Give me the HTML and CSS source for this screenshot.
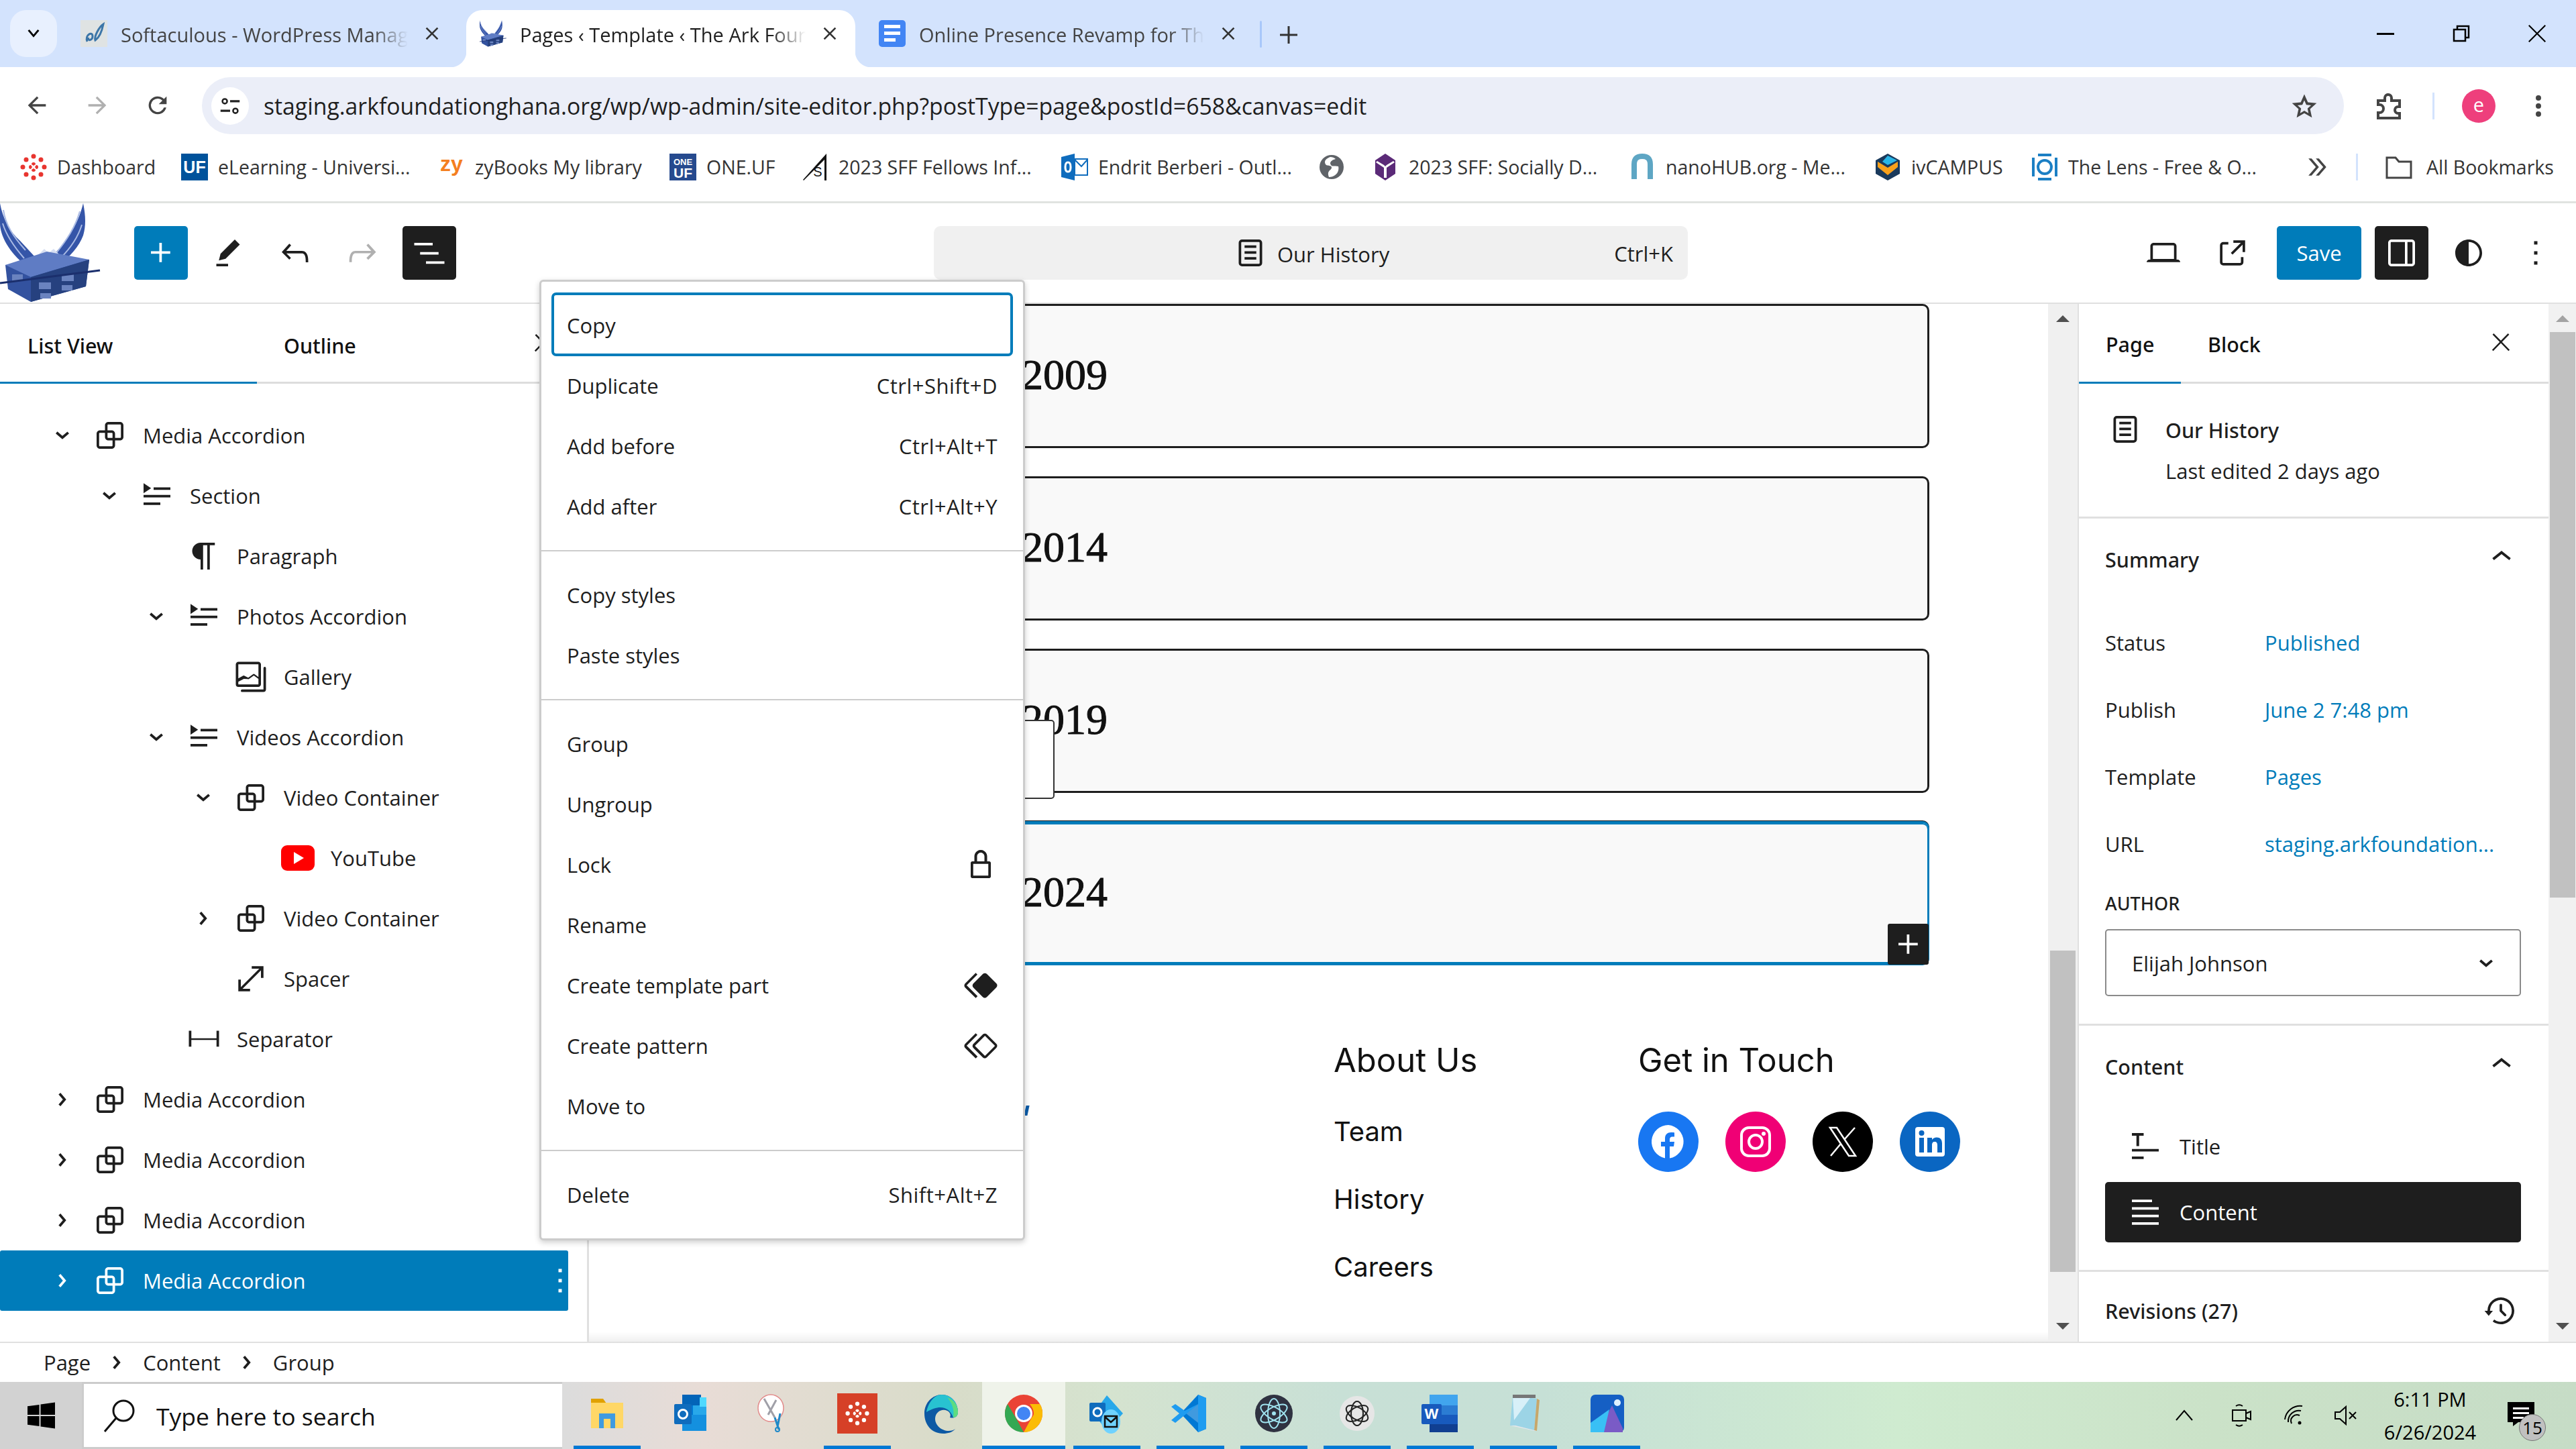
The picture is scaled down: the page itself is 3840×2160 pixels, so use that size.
FILE: index.html
```html
<!DOCTYPE html>
<html lang="en">
<head>
<meta charset="utf-8">
<title>Pages ‹ Template ‹ The Ark Foundation</title>
<link rel="stylesheet" href="styles.css">
</head>
<body>
<svg class="sprite" xmlns="http://www.w3.org/2000/svg">
  <symbol id="plus" viewBox="0 0 24 24"><path d="M11 12.5V17.5H12.5V12.5H17.5V11H12.5V6H11V11H6V12.5H11Z"/></symbol>
  <symbol id="pen" viewBox="0 0 24 24"><path d="m19 7-3-3-8.5 8.5-1 4 4-1L19 7Zm-7 11.5H5V20h7v-1.5Z"/></symbol>
  <symbol id="undo" viewBox="0 0 24 24"><path d="M18.3 11.7c-.6-.6-1.4-.9-2.3-.9H6.7l2.9-3.3-1.1-1-4.5 5L8.5 16l1-1-2.7-2.7H16c.5 0 .9.2 1.3.5 1 1 1 3.4 1 4.5v.3h1.5v-.2c0-1.5 0-4.3-1.5-5.7z"/></symbol>
  <symbol id="redo" viewBox="0 0 24 24"><path d="M15.6 6.5l-1.1 1 2.9 3.3H8c-.9 0-1.7.3-2.3.9-1.4 1.5-1.4 4.2-1.4 5.6v.2h1.5v-.3c0-1.1 0-3.5 1-4.5.3-.3.7-.5 1.3-.5h9.2L14.5 15l1.1 1.1 4.6-4.6-4.6-5z"/></symbol>
  <symbol id="outline" viewBox="0 0 24 24"><path d="M3 6h11v1.5H3V6Zm3.5 5.5h11V13h-11v-1.5ZM21 17H10v1.5h11V17Z"/></symbol>
  <symbol id="doc" viewBox="0 0 24 24"><path d="M15.5 7.5h-7V9h7V7.5Zm-7 3.5h7v1.5h-7V11Zm7 3.5h-7V16h7v-1.5Z"/><path d="M17 4H7a2 2 0 0 0-2 2v12a2 2 0 0 0 2 2h10a2 2 0 0 0 2-2V6a2 2 0 0 0-2-2Zm-10 1.5h10a.5.5 0 0 1 .5.5v12a.5.5 0 0 1-.5.5H7a.5.5 0 0 1-.5-.5V6a.5.5 0 0 1 .5-.5Z"/></symbol>
  <symbol id="group" viewBox="0 0 24 24"><path d="M18 4h-7c-1.1 0-2 .9-2 2v3H6c-1.1 0-2 .9-2 2v7c0 1.1.9 2 2 2h7c1.1 0 2-.9 2-2v-3h3c1.1 0 2-.9 2-2V6c0-1.1-.9-2-2-2zm-4.5 14c0 .3-.2.5-.5.5H6c-.3 0-.5-.2-.5-.5v-7c0-.3.2-.5.5-.5h3V13c0 1.1.9 2 2 2h2.5v3zm0-4.5H11c-.3 0-.5-.2-.5-.5v-2.5H13c.3 0 .5.2.5.5v2.5zm5-.5c0 .3-.2.5-.5.5h-3V11c0-1.1-.9-2-2-2h-2.5V6c0-.3.2-.5.5-.5h7c.3 0 .5.2.5.5v7z"/></symbol>
  <symbol id="down" viewBox="0 0 24 24"><path d="m15.99 10.889-3.988 3.418-3.988-3.418.976-1.14 3.012 2.582 3.012-2.581.976 1.139Z"/></symbol>
  <symbol id="right" viewBox="0 0 24 24"><path d="M10.8622 8.04053L14.2805 12.0286L10.8622 16.0167L9.72327 15.0405L12.3049 12.0286L9.72327 9.01672L10.8622 8.04053Z"/></symbol>
  <symbol id="para" viewBox="0 0 24 24"><path d="m9.99609 14v-.2251l.00391.0001v6.225h1.5v-14.5h2.5v14.5h1.5v-14.5h3v-1.5h-8.50391c-2.76142 0-5 2.23858-5 5 0 2.7614 2.23858 5 5 5z"/></symbol>
  <symbol id="gallery" viewBox="0 0 24 24"><path d="M16.375 4.5H4.625a.125.125 0 0 0-.125.125v8.254l2.859-1.54a.75.75 0 0 1 .68-.016l2.384 1.142 2.89-2.074a.75.75 0 0 1 .874 0l2.313 1.66V4.625a.125.125 0 0 0-.125-.125ZM3 4.625C3 3.728 3.728 3 4.625 3h11.75C17.272 3 18 3.728 18 4.625v11.75c0 .897-.728 1.625-1.625 1.625H4.625A1.625 1.625 0 0 1 3 16.375V4.625Zm1.5 10.303v1.447c0 .07.056.125.125.125h11.75a.125.125 0 0 0 .125-.125v-3.19l-2.75-1.975-2.813 2.018a.75.75 0 0 1-.76.067L7.78 13.15 4.5 14.928Z" fill-rule="evenodd"/><path d="M20.25 6a.75.75 0 0 1 .75.75v12.625A1.625 1.625 0 0 1 19.375 21H6.75a.75.75 0 0 1 0-1.5h12.625a.125.125 0 0 0 .125-.125V6.75a.75.75 0 0 1 .75-.75Z"/></symbol>
  <symbol id="details" viewBox="0 0 24 24"><path d="M4 16h10v1.5H4V16Zm0-4.5h16V13H4v-1.5ZM10 7h10v1.5H10V7Z"/><path d="M4 4.5v6L8.5 7.5 4 4.5Z"/></symbol>
  <symbol id="spacer" viewBox="0 0 24 24"><path d="M7 18h4.5v1.5h-7v-7H6V17L17 6h-4.5V4.5h7v7H18V7L7 18Z"/></symbol>
  <symbol id="sep" viewBox="0 0 24 24"><path d="M4.5 12.5v4H3V7h1.5v4.5h15V7H21v9.5h-1.5v-4h-15Z"/></symbol>
  <symbol id="dots" viewBox="0 0 24 24"><path d="M13 19h-2v-2h2v2zm0-6h-2v-2h2v2zm0-6h-2V5h2v2z"/></symbol>
  <symbol id="close" viewBox="0 0 24 24"><path d="M13 11.8l6.1-6.3-1-1-6.1 6.2-6.1-6.2-1 1 6.1 6.3-6.5 6.7 1 1 6.5-6.6 6.5 6.6 1-1z"/></symbol>
  <symbol id="up" viewBox="0 0 24 24"><path d="M6.5 12.4L12 8l5.5 4.4-.9 1.2L12 10l-4.5 3.6-1-1.2z"/></symbol>
  <symbol id="laptop" viewBox="0 0 24 24"><path d="M20.5 16h-.7V8c0-1.1-.9-2-2-2H6.2c-1.1 0-2 .9-2 2v8h-.7c-.8 0-1.5.7-1.5 1.5h20c0-.8-.7-1.5-1.5-1.5zM5.7 8c0-.3.2-.5.5-.5h11.6c.3 0 .5.2.5.5v7.6H5.7V8z"/></symbol>
  <symbol id="external" viewBox="0 0 24 24"><path d="M19.5 4.5h-7V6h4.44l-5.97 5.97 1.06 1.06L18 7.06v4.44h1.5v-7Zm-13 1a2 2 0 0 0-2 2v10a2 2 0 0 0 2 2h10a2 2 0 0 0 2-2v-3H17v3a.5.5 0 0 1-.5.5h-10a.5.5 0 0 1-.5-.5v-10a.5.5 0 0 1 .5-.5h3V5.5h-3Z"/></symbol>
  <symbol id="drawer" viewBox="0 0 24 24"><path d="M18 4H6c-1.1 0-2 .9-2 2v12c0 1.1.9 2 2 2h12c1.1 0 2-.9 2-2V6c0-1.1-.9-2-2-2zm-4 14.5H6c-.3 0-.5-.2-.5-.5V6c0-.3.2-.5.5-.5h8v13zm4.5-.5c0 .3-.2.5-.5.5h-2.5v-13H18c.3 0 .5.2.5.5v12z"/></symbol>
  <symbol id="styles" viewBox="0 0 24 24"><path fill-rule="evenodd" d="M12 4c-4.4 0-8 3.6-8 8s3.6 8 8 8 8-3.6 8-8-3.6-8-8-8zm0 14.5c3.6 0 6.5-2.9 6.5-6.5S15.6 5.5 12 5.5v13z"/></symbol>
  <symbol id="lock" viewBox="0 0 24 24"><path d="M17 10h-1.2V7c0-2.1-1.7-3.8-3.8-3.8-2.1 0-3.8 1.7-3.8 3.8v3H7c-.6 0-1 .4-1 1v8c0 .6.4 1 1 1h10c.6 0 1-.4 1-1v-8c0-.6-.4-1-1-1zm-2.8 0H9.8V7c0-1.2 1-2.2 2.2-2.2s2.2 1 2.2 2.2v3zm2.3 8.5h-9v-7h9v7z"/></symbol>
  <symbol id="symfill" viewBox="0 0 24 24"><path d="M21.3 10.8l-5.6-5.6c-.7-.7-1.8-.7-2.5 0l-5.6 5.6c-.7.7-.7 1.8 0 2.5l5.6 5.6c.3.3.8.5 1.2.5s.9-.2 1.2-.5l5.6-5.6c.8-.7.8-1.9.1-2.5zm-17.6 1L10 5.5l-1-1-6.3 6.3c-.7.7-.7 1.8 0 2.5L9 19.5l1.1-1.1-6.3-6.3c-.2 0-.2-.2-.1-.3z"/></symbol>
  <symbol id="symline" viewBox="0 0 24 24"><path d="M21.3 10.8l-5.6-5.6c-.7-.7-1.8-.7-2.5 0l-5.6 5.6c-.7.7-.7 1.8 0 2.5l5.6 5.6c.3.3.8.5 1.2.5s.9-.2 1.2-.5l5.6-5.6c.8-.7.8-1.9.1-2.5zm-1 1.4l-5.6 5.6c-.1.1-.3.1-.4 0l-5.6-5.6c-.1-.1-.1-.3 0-.4l5.6-5.6s.1-.1.2-.1.1 0 .2.1l5.6 5.6c.1.1.1.3 0 .4zm-16.6-.4L10 5.5l-1-1-6.3 6.3c-.7.7-.7 1.8 0 2.5L9 19.5l1.1-1.1-6.3-6.3c-.2 0-.2-.2-.1-.3z"/></symbol>
  <symbol id="lines" viewBox="0 0 24 24"><path d="M4 6h12V4.5H4V6Zm16 4.5H4V9h16v1.5ZM4 15h16v-1.5H4V15Zm0 4.5h16V18H4v1.5Z"/></symbol>
  <symbol id="titleic" viewBox="0 0 24 24"><path d="M4 4h7v1.6H8.3v6.2H6.7V5.6H4V4Zm0 9.5h16V15H4v-1.5ZM4 18h7v1.5H4V18Z"/></symbol>
  <symbol id="backup" viewBox="0 0 24 24"><path d="M5.5 12h1.75l-2.5 3-2.5-3H4a8 8 0 113.134 6.35l.907-1.194A6.5 6.5 0 105.5 12zm9.53 1.97l-2.28-2.28V8.5a.75.75 0 00-1.5 0V12a.747.747 0 00.218.529l2.5 2.5a.75.75 0 101.06-1.061z"/></symbol>
  <symbol id="ark" viewBox="0 0 150 148">
    <path fill="#3555a8" d="M0 0C4 22 14 42 30 56L54 82 38 92C14 74 0 48 0 30Z"/>
    <path fill="#3555a8" d="M124 0C128 20 128 34 124 48 118 64 104 80 90 90L76 80C96 62 116 34 124 0Z"/>
    <path fill="none" stroke="#a9bae4" stroke-width="2" d="M5 10C8 32 20 50 38 70M4 30C10 50 22 66 36 82M119 12C112 36 100 54 84 74M122 32C116 52 104 68 90 82"/>
    <path fill="#d7dff2" d="M56 78 66 68 74 76 66 84ZM70 76 80 68 92 80 80 86Z"/>
    <path fill="#33529f" d="M8 92 70 86 133 84 128 124 46 147 12 128Z"/>
    <path fill="#5f7cc4" d="M8 92 46 110 133 84 70 72Z"/>
    <path fill="#26417f" d="M46 110 46 147 128 124 133 84Z"/>
    <path fill="#6a83bf" d="M58 118h18v10H58ZM92 106h18v10H92ZM60 134h16v8H60ZM92 122h16v8H92ZM18 106h16v10H18Z"/>
    <path stroke="#1b2f6d" stroke-width="3" fill="none" d="M0 119 149 100"/>
  </symbol>
  <symbol id="gdoc" viewBox="0 0 40 40"><rect width="40" height="40" rx="5" fill="#4285f4"/><path fill="#fff" d="M8 7h24v5H8ZM8 17h24v5H8ZM8 27h17v5H8Z"/></symbol>
  <symbol id="outlookic" viewBox="0 0 40 40"><path fill="#0f6cbd" d="M0 5 20 0v40L0 35Z"/><path fill="none" stroke="#fff" stroke-width="3" d="M10 13c-3 0-4 3-4 7s1 7 4 7 4-3 4-7-1-7-4-7Z"/><path fill="#fff" stroke="#0f6cbd" stroke-width="2" d="M20 8h19v24H20Z"/><path fill="none" stroke="#0f6cbd" stroke-width="2" d="M20 9l10 10L39 9"/></symbol>
  <symbol id="canvasdots" viewBox="0 0 40 40"><g fill="currentColor"><circle cx="20" cy="4" r="3.5"/><circle cx="20" cy="36" r="3.5"/><circle cx="4" cy="20" r="3.5"/><circle cx="36" cy="20" r="3.5"/><circle cx="9" cy="9" r="3.5"/><circle cx="31" cy="9" r="3.5"/><circle cx="9" cy="31" r="3.5"/><circle cx="31" cy="31" r="3.5"/><path d="M20 13c2 0 3 1 3 3l-3 2-3-2c0-2 1-3 3-3ZM20 27c-2 0-3-1-3-3l3-2 3 2c0 2-1 3-3 3ZM13 20c0-2 1-3 3-3l2 3-2 3c-2 0-3-1-3-3ZM27 20c0 2-1 3-3 3l-2-3 2-3c2 0 3 1 3 3Z"/></g></symbol>
</svg>

<header class="tabstrip">
  <div class="tab-menu"><svg class="ic-tabmenu" viewBox="0 0 24 24"><path d="M6 9l6 7 6-7-1.6-1.3L12 13 7.6 7.7Z"/></svg></div>
  <div class="tab">
    <svg class="fav" viewBox="0 0 40 40"><rect width="40" height="40" fill="#dfe3e3"/><path fill="none" stroke="#3c76a8" stroke-width="3" d="M10 32C6 22 18 16 18 24c0 6-8 8-6 2M34 6C28 10 20 24 22 30c6-4 10-14 12-24Z"/></svg>
    <span class="tab-title">Softaculous - WordPress Manag</span>
    <svg class="ic-x" viewBox="0 0 24 24"><path d="M6.4 5 12 10.6 17.6 5 19 6.4 13.4 12l5.6 5.6-1.4 1.4L12 13.4 6.4 19 5 17.6 10.6 12 5 6.4Z"/></svg>
  </div>
  <div class="tab active">
    <svg class="fav"><use href="#ark"/></svg>
    <span class="tab-title">Pages ‹ Template ‹ The Ark Four</span>
    <svg class="ic-x" viewBox="0 0 24 24"><path d="M6.4 5 12 10.6 17.6 5 19 6.4 13.4 12l5.6 5.6-1.4 1.4L12 13.4 6.4 19 5 17.6 10.6 12 5 6.4Z"/></svg>
  </div>
  <div class="tab">
    <svg class="fav"><use href="#gdoc"/></svg>
    <span class="tab-title">Online Presence Revamp for Th</span>
    <svg class="ic-x" viewBox="0 0 24 24"><path d="M6.4 5 12 10.6 17.6 5 19 6.4 13.4 12l5.6 5.6-1.4 1.4L12 13.4 6.4 19 5 17.6 10.6 12 5 6.4Z"/></svg>
  </div>
  <span class="tab-sep"></span>
  <svg class="ic-newtab" viewBox="0 0 26 26"><path d="M11.5 0h3v11.500h11.500v3H14.500V26h-3V14.500H0v-3h11.500Z"/></svg>
  <div class="winctl">
    <svg class="win" viewBox="0 0 26 26"><path d="M0 12h26v3H0Z"/></svg>
    <svg class="win" viewBox="0 0 26 26"><path fill="none" stroke="#000" stroke-width="2.500" d="M2 7h17v17H2ZM7 7V2h17v17h-5"/></svg>
    <svg class="win" viewBox="0 0 26 26"><path d="M1.500 0 13 11.500 24.500 0 26 1.500 14.500 13 26 24.500 24.500 26 13 14.500 1.500 26 0 24.500 11.500 13 0 1.500Z"/></svg>
  </div>
</header>

<nav class="toolbar">
  <svg class="navic" viewBox="0 0 24 24"><path d="M20 11H7.800l5.600-5.600L12 4l-8 8 8 8 1.400-1.400L7.800 13H20Z"/></svg>
  <svg class="navic dim" viewBox="0 0 24 24"><path d="M4 11h12.200l-5.600-5.600L12 4l8 8-8 8-1.400-1.400 5.600-5.600H4Z"/></svg>
  <svg class="navic" viewBox="0 0 24 24"><path d="M17.650 6.350A8 8 0 1 0 19.730 14h-2.080A6 6 0 1 1 12 6c1.660 0 3.140.69 4.220 1.780L13 11h7V4Z"/></svg>
  <div class="omnibox">
    <div class="tune"><svg class="ic-tune" viewBox="0 0 24 24"><path d="M4 7.500a3 3 0 1 1 6 0 3 3 0 0 1-6 0Zm1.600 0a1.400 1.400 0 1 0 2.800 0 1.400 1.400 0 0 0-2.800 0ZM12 6.500h9v2h-9ZM14 16.500a3 3 0 1 1 6 0 3 3 0 0 1-6 0Zm1.600 0a1.400 1.400 0 1 0 2.800 0 1.400 1.400 0 0 0-2.800 0ZM3 15.500h9v2H3Z"/></svg></div>
    <span class="url">staging.arkfoundationghana.org/wp/wp-admin/site-editor.php?postType=page&amp;postId=658&amp;canvas=edit</span>
    <svg class="ic-star" viewBox="0 0 24 24"><path d="M12 2.500l2.900 6.500 7.100.7-5.300 4.700 1.500 7-6.200-3.600-6.200 3.600 1.500-7L2 9.700l7.100-.7Zm0 4.900L10.400 11l-3.900.4 2.900 2.600-.8 3.800 3.400-2 3.400 2-.8-3.800 2.900-2.600-3.900-.4Z"/></svg>
  </div>
  <div class="tool-right">
    <svg class="ic-ext" viewBox="0 0 24 24"><path fill="none" stroke="#444" stroke-width="2" d="M4 8h5V6a2.500 2.500 0 0 1 5 0v2h6v4.500h-1a2.500 2.500 0 0 0 0 5h1V21H4v-4h1a3 3 0 0 0 0-6H4Z"/></svg>
    <span class="tool-sep"></span>
    <div class="avatar">e</div>
    <svg class="ic-ext" viewBox="0 0 24 24"><path fill="#444" d="M12 4a2 2 0 1 1 0 4 2 2 0 0 1 0-4Zm0 6a2 2 0 1 1 0 4 2 2 0 0 1 0-4Zm0 6a2 2 0 1 1 0 4 2 2 0 0 1 0-4Z"/></svg>
  </div>
</nav>

<nav class="bookmarks">
  <a class="bm"><svg class="bmi cv"><use href="#canvasdots"/></svg><span>Dashboard</span></a>
  <a class="bm"><svg class="bmi" viewBox="0 0 40 40"><rect width="40" height="40" fill="#00529b"/><text x="20" y="29" text-anchor="middle" class="svgt uf">UF</text></svg><span>eLearning - Universi...</span></a>
  <a class="bm"><svg class="bmi" viewBox="0 0 40 40"><text x="20" y="26" text-anchor="middle" class="svgt zy">zy</text></svg><span>zyBooks My library</span></a>
  <a class="bm"><svg class="bmi" viewBox="0 0 40 40"><rect width="40" height="40" fill="#264a8e"/><text x="20" y="17" text-anchor="middle" class="svgt one">ONE</text><text x="20" y="36" text-anchor="middle" class="svgt uf2">UF</text></svg><span>ONE.UF</span></a>
  <a class="bm"><svg class="bmi" viewBox="0 0 40 40"><path fill="#111" d="M37 0v40h-3V9L3 40l-1-1Z"/><text x="24" y="34" text-anchor="middle" class="svgt s">S</text></svg><span>2023 SFF Fellows Inf...</span></a>
  <a class="bm"><svg class="bmi"><use href="#outlookic"/></svg><span>Endrit Berberi - Outl...</span></a>
  <a class="bm"><svg class="bmi" viewBox="0 0 40 40"><circle cx="20" cy="20" r="18" fill="#5f6368"/><path fill="#fff" d="M18 5c-8 3-10 8-6 12 4 2 8 0 8 4s-8 4-4 14c10 0 16-8 14-16-6-2-10 2-12-4 0-4 4-6 8-7-2-2-5-3-8-3Z"/></svg></a>
  <a class="bm"><svg class="bmi" viewBox="0 0 40 40"><path fill="#5b2a78" d="M20 0 35 10v20L20 40 5 30V10Z"/><path fill="#fff" d="M6 13l12 8v15l4 0V21l12-8-2-2-10 6-2 2-2-2L8 11Z"/></svg><span>2023 SFF: Socially D...</span></a>
  <a class="bm"><svg class="bmi" viewBox="0 0 40 40"><path fill="none" stroke="#5ea6c4" stroke-width="8" d="M8 38V16C8 6 14 4 20 4s12 2 12 12v22"/></svg><span>nanoHUB.org - Me...</span></a>
  <a class="bm"><svg class="bmi" viewBox="0 0 40 40"><path fill="#1a3a5c" d="M20 0 38 10v20L20 40 2 30V10Z"/><path fill="#f9a11b" d="M5 12l15 9 15-9v8L20 32 5 20Z"/><path fill="#29b6e8" d="M20 3 34 10 20 17 12 12Z"/></svg><span>ivCAMPUS</span></a>
  <a class="bm"><svg class="bmi" viewBox="0 0 40 40"><g fill="none" stroke="#1b7fc4" stroke-width="4"><circle cx="20" cy="20" r="10"/><path d="M3 6v28M37 6v28"/></g><path fill="#1b7fc4" d="M10 0h20v4H10ZM10 36h20v4H10Z"/></svg><span>The Lens - Free &amp; O...</span></a>
  <svg class="bmmore" viewBox="0 0 24 24"><path d="M5 5h2.500l6 7-6 7H5l6-7Zm6 0h2.500l6 7-6 7H11l6-7Z"/></svg>
  <span class="bmsep"></span>
  <a class="bm"><svg class="bmi folder" viewBox="0 0 40 40"><path fill="none" stroke="#444" stroke-width="3" d="M2 6h13l5 6h18v24H2Z"/></svg><span>All Bookmarks</span></a>
</nav>

<header class="wp-head">
  <svg class="logo"><use href="#ark"/></svg>
  <div class="head-left">
    <button class="ibtn primary"><svg class="ic60"><use href="#plus"/></svg></button>
    <button class="ibtn"><svg class="ic60"><use href="#pen"/></svg></button>
    <button class="ibtn"><svg class="ic60"><use href="#undo"/></svg></button>
    <button class="ibtn muted"><svg class="ic60"><use href="#redo"/></svg></button>
    <button class="ibtn dark"><svg class="ic60"><use href="#outline"/></svg></button>
  </div>
  <div class="cmdbar">
    <svg class="ic60 cmd-ic"><use href="#doc"/></svg>
    <span class="cmd-title">Our History</span>
    <span class="cmd-key">Ctrl+K</span>
  </div>
  <div class="head-right">
    <button class="ibtn"><svg class="ic60"><use href="#laptop"/></svg></button>
    <button class="ibtn ext-btn"><svg class="ic60"><use href="#external"/></svg></button>
    <button class="save">Save</button>
    <button class="ibtn dark"><svg class="ic60"><use href="#drawer"/></svg></button>
    <button class="ibtn"><svg class="ic60"><use href="#styles"/></svg></button>
    <button class="ibtn"><svg class="ic60"><use href="#dots"/></svg></button>
  </div>
</header>

<main class="wp-main">
  <aside class="listpanel">
    <div class="lp-tabs">
      <span class="lp-tab on">List View</span>
      <span class="lp-tab">Outline</span>
      <svg class="ic-close lp-close"><use href="#close"/></svg>
    </div>
    <ul class="tree">
      <li class="row l1"><svg class="ic60 chev"><use href="#down"/></svg><svg class="ic60"><use href="#group"/></svg><span>Media Accordion</span></li>
      <li class="row l2"><svg class="ic60 chev"><use href="#down"/></svg><svg class="ic60"><use href="#details"/></svg><span>Section</span></li>
      <li class="row l3"><span class="chev"></span><svg class="ic60"><use href="#para"/></svg><span>Paragraph</span></li>
      <li class="row l3"><svg class="ic60 chev"><use href="#down"/></svg><svg class="ic60"><use href="#details"/></svg><span>Photos Accordion</span></li>
      <li class="row l4"><span class="chev"></span><svg class="ic60"><use href="#gallery"/></svg><span>Gallery</span></li>
      <li class="row l3"><svg class="ic60 chev"><use href="#down"/></svg><svg class="ic60"><use href="#details"/></svg><span>Videos Accordion</span></li>
      <li class="row l4"><svg class="ic60 chev"><use href="#down"/></svg><svg class="ic60"><use href="#group"/></svg><span>Video Container</span></li>
      <li class="row l5"><span class="chev"></span><svg class="ic60" viewBox="0 0 60 60"><rect x="5" y="11" width="50" height="38" rx="9" fill="#f00"/><path fill="#fff" d="M24 21l15 9-15 9Z"/></svg><span>YouTube</span></li>
      <li class="row l4"><svg class="ic60 chev"><use href="#right"/></svg><svg class="ic60"><use href="#group"/></svg><span>Video Container</span></li>
      <li class="row l4"><span class="chev"></span><svg class="ic60"><use href="#spacer"/></svg><span>Spacer</span></li>
      <li class="row l3"><span class="chev"></span><svg class="ic60"><use href="#sep"/></svg><span>Separator</span></li>
      <li class="row l1"><svg class="ic60 chev"><use href="#right"/></svg><svg class="ic60"><use href="#group"/></svg><span>Media Accordion</span></li>
      <li class="row l1"><svg class="ic60 chev"><use href="#right"/></svg><svg class="ic60"><use href="#group"/></svg><span>Media Accordion</span></li>
      <li class="row l1"><svg class="ic60 chev"><use href="#right"/></svg><svg class="ic60"><use href="#group"/></svg><span>Media Accordion</span></li>
      <li class="row l1 selected"><svg class="ic60 chev"><use href="#right"/></svg><svg class="ic60"><use href="#group"/></svg><span>Media Accordion</span><svg class="ic60 row-more"><use href="#dots"/></svg></li>
    </ul>
  </aside>

  <section class="canvas">
    <div class="card"><span class="year">2009</span></div>
    <div class="card"><span class="year">2014</span></div>
    <div class="card"><span class="year">2019</span><div class="hidden-box"></div></div>
    <div class="card current"><span class="year">2024</span><button class="card-add"><svg class="ic60"><use href="#plus"/></svg></button></div>
    <footer class="site-foot">
      <i class="logo-frag"></i>
      <div class="foot-col about">
        <h3>About Us</h3>
        <a>Team</a>
        <a>History</a>
        <a>Careers</a>
      </div>
      <div class="foot-col">
        <h3>Get in Touch</h3>
        <div class="socials">
          <span class="soc fb"><svg viewBox="0 0 90 90"><path fill="#fff" d="M45 20a25 25 0 0 0-5 49.500V52h-6v-7h6v-5c0-6 4-9 9-9 3 0 5 .4 5 .4v6h-3c-3 0-4 2-4 4V45h7l-1 7h-6v17.500A25 25 0 0 0 45 20Z"/></svg></span>
          <span class="soc ig"><svg viewBox="0 0 90 90"><g fill="none" stroke="#fff" stroke-width="4"><rect x="24" y="24" width="42" height="42" rx="11"/><circle cx="45" cy="45" r="10"/></g><circle cx="57" cy="33" r="3" fill="#fff"/></svg></span>
          <span class="soc xx"><svg viewBox="0 0 90 90"><path fill="none" stroke="#fff" stroke-width="2.500" d="M26 24h10l28 42H54ZM63 24 47 42M42 48 27 66"/></svg></span>
          <span class="soc li"><svg viewBox="0 0 90 90"><rect x="23" y="23" width="44" height="44" rx="4" fill="#fff"/><path fill="#0a66c2" d="M29 39h7v22h-7ZM32.500 28a4 4 0 1 1 0 8 4 4 0 0 1 0-8ZM41 39h7v3c1.500-2 4-3.500 7-3.500 5 0 8 3 8 9V61h-7V50c0-3-1-5-4-5s-4 2-4 5v11h-7Z"/></svg></span>
        </div>
      </div>
    </footer>
  </section>

  <div class="vscroll">
    <i class="arrow up-a"></i>
    <i class="thumb canvas-thumb"></i>
    <i class="arrow dn-a"></i>
  </div>

  <aside class="settings">
    <div class="st-tabs">
      <span class="st-tab on">Page</span>
      <span class="st-tab">Block</span>
      <svg class="ic-close st-close"><use href="#close"/></svg>
    </div>
    <div class="st-doc">
      <svg class="ic60"><use href="#doc"/></svg>
      <div class="st-doc-text">
        <strong>Our History</strong>
        <span>Last edited 2 days ago</span>
      </div>
    </div>
    <section class="panel">
      <div class="panel-head"><span>Summary</span><svg class="ic60"><use href="#up"/></svg></div>
      <dl class="meta">
        <div class="meta-row"><dt>Status</dt><dd>Published</dd></div>
        <div class="meta-row"><dt>Publish</dt><dd>June 2 7:48 pm</dd></div>
        <div class="meta-row"><dt>Template</dt><dd>Pages</dd></div>
        <div class="meta-row"><dt>URL</dt><dd>staging.arkfoundation...</dd></div>
      </dl>
      <div class="author-label">AUTHOR</div>
      <div class="select"><span>Elijah Johnson</span><svg class="ic60"><use href="#down"/></svg></div>
    </section>
    <section class="panel">
      <div class="panel-head"><span>Content</span><svg class="ic60"><use href="#up"/></svg></div>
      <div class="c-list">
        <div class="c-row"><svg class="ic60"><use href="#titleic"/></svg><span>Title</span></div>
        <div class="c-row on"><svg class="ic60"><use href="#lines"/></svg><span>Content</span></div>
      </div>
    </section>
    <section class="panel last">
      <div class="panel-head rev"><span>Revisions (27)</span><svg class="ic60"><use href="#backup"/></svg></div>
    </section>
  </aside>

  <div class="vscroll side">
    <i class="arrow up-a light"></i>
    <i class="thumb side-thumb"></i>
    <i class="arrow dn-a"></i>
  </div>

  <div class="ctx">
    <div class="ctx-group">
      <div class="ctx-item focus"><span>Copy</span></div>
      <div class="ctx-item"><span>Duplicate</span><kbd>Ctrl+Shift+D</kbd></div>
      <div class="ctx-item"><span>Add before</span><kbd>Ctrl+Alt+T</kbd></div>
      <div class="ctx-item"><span>Add after</span><kbd>Ctrl+Alt+Y</kbd></div>
    </div>
    <div class="ctx-group">
      <div class="ctx-item"><span>Copy styles</span></div>
      <div class="ctx-item"><span>Paste styles</span></div>
    </div>
    <div class="ctx-group">
      <div class="ctx-item"><span>Group</span></div>
      <div class="ctx-item"><span>Ungroup</span></div>
      <div class="ctx-item"><span>Lock</span><svg class="ic60"><use href="#lock"/></svg></div>
      <div class="ctx-item"><span>Rename</span></div>
      <div class="ctx-item"><span>Create template part</span><svg class="ic60"><use href="#symfill"/></svg></div>
      <div class="ctx-item"><span>Create pattern</span><svg class="ic60"><use href="#symline"/></svg></div>
      <div class="ctx-item"><span>Move to</span></div>
    </div>
    <div class="ctx-group end">
      <div class="ctx-item"><span>Delete</span><kbd>Shift+Alt+Z</kbd></div>
    </div>
  </div>
</main>

<div class="crumbs">
  <span>Page</span><svg class="crumb-sep"><use href="#right"/></svg>
  <span>Content</span><svg class="crumb-sep"><use href="#right"/></svg>
  <span>Group</span>
</div>

<footer class="taskbar">
  <div class="start"><svg class="winlogo" viewBox="0 0 42 40"><path d="M0 6 18 3.500V19H0ZM20 3 42 0v19H20ZM0 21h18v15.500L0 34ZM20 21h22v19l-22-3Z"/></svg></div>
  <div class="search">
    <svg class="searchic" viewBox="0 0 50 50"><circle cx="31" cy="18" r="15" fill="none" stroke="#111" stroke-width="3"/><path d="M20 29 3 49" stroke="#111" stroke-width="3"/></svg>
    <span>Type here to search</span>
  </div>
  <div class="tb-apps">
    <span class="app on"><svg viewBox="0 0 60 60"><path fill="#e0a100" d="M6 8h18l5 7H6Z"/><rect x="6" y="14" width="48" height="38" fill="#ffd766"/><path fill="#3f9be0" d="M18 30h24v22h-7V38H25v14h-7Z"/></svg></span>
    <span class="app"><svg viewBox="0 0 60 60"><path fill="#0364b8" d="M18 2h28v20H18Z"/><path fill="#28a8ea" d="M32 18h22v16H32Z"/><path fill="#0078d4" d="M18 18h16v16H18Z"/><path fill="#50d9ff" d="M44 6h10v14H44Z"/><path fill="#1490df" d="M18 32h36v24H18Z"/><rect x="6" y="16" width="26" height="30" rx="2" fill="#0f6cbd"/><circle cx="19" cy="31" r="6.500" fill="none" stroke="#fff" stroke-width="3"/></svg></span>
    <span class="app"><svg viewBox="0 0 60 60"><ellipse cx="26" cy="22" rx="19" ry="20" fill="#fff" stroke="#e28b8b" stroke-width="1.500"/><path stroke="#a0a0a8" stroke-width="3" d="M16 8l16 28M34 10 22 32"/><path fill="none" stroke="#1e88c8" stroke-width="3" d="M32 36l6 18M40 30l-4 20"/><circle cx="36" cy="54" r="3" fill="none" stroke="#1e88c8" stroke-width="2"/></svg></span>
    <span class="app on"><svg viewBox="0 0 60 60"><rect x="0" y="0" width="60" height="60" fill="#d64027"/><svg x="12" y="12" width="36" height="36" class="cvw"><use href="#canvasdots"/></svg></svg></span>
    <span class="app"><svg viewBox="0 0 60 60"><path fill="#0c59a4" d="M6 30C6 14 18 2 32 2c14 0 24 12 24 26 0 7-6 10-12 8 2-4 0-8-4-10-8-4-18 2-18 12 0 10 10 18 20 18 4 0 8-1 10-3-4 5-11 7-18 7C16 60 6 46 6 30Z"/><path fill="#28c2d1" d="M32 2c14 0 24 12 24 26 0 5-3 8-7 8-6-16-20-20-40-8 3-15 12-26 23-26Z"/><path fill="#5ddc80" d="M40 6c10 4 16 12 16 22 0 5-3 8-7 8 2-12-2-22-9-30Z"/></svg></span>
    <span class="app on hi"><svg viewBox="0 0 60 60"><circle cx="30" cy="30" r="28" fill="#ea4335"/><path fill="#34a853" d="M6 16 18 36l12 22C14 58 2 46 2 30c0-5 1.500-10 4-14Z"/><path fill="#fbbc05" d="M30 16h24c3 4 4 9 4 14 0 15-12 28-28 28l12-22c2-2 3-4 3-6 0-5-2-9-6-14Z"/><circle cx="30" cy="30" r="13" fill="#fff"/><circle cx="30" cy="30" r="10" fill="#4285f4"/></svg></span>
    <span class="app on"><svg viewBox="0 0 60 60"><path fill="#28a8ea" d="M30 3 54 30 30 56 10 30Z"/><rect x="4" y="14" width="24" height="28" rx="2" fill="#0f6cbd"/><circle cx="16" cy="28" r="6" fill="none" stroke="#fff" stroke-width="3"/><ellipse cx="36" cy="42" rx="14" ry="18" fill="#6fd2ff"/><path fill="none" stroke="#111" stroke-width="2.500" d="M27 34h18v16H27ZM27 35l9 8 9-8"/></svg></span>
    <span class="app on"><svg viewBox="0 0 60 60"><path fill="#0078d4" d="M42 2 16 30l26 28 12-5V7Z"/><path fill="#fff" opacity=".25" d="M42 16v28L24 30Z"/><path fill="#1f9cf0" d="M42 2 54 7v46l-12 5ZM42 16 8 44l-6-4 12-10L2 20l6-4 14 10Z"/></svg></span>
    <span class="app on"><svg viewBox="0 0 60 60"><circle cx="30" cy="30" r="28" fill="#2f3241"/><g fill="none" stroke="#9fe2ef" stroke-width="2"><ellipse cx="30" cy="30" rx="22" ry="9" transform="rotate(30 30 30)"/><ellipse cx="30" cy="30" rx="22" ry="9" transform="rotate(-30 30 30)"/><ellipse cx="30" cy="30" rx="22" ry="9" transform="rotate(90 30 30)"/></g><circle cx="30" cy="30" r="3" fill="#9fe2ef"/></svg></span>
    <span class="app on"><svg viewBox="0 0 60 60"><circle cx="30" cy="30" r="26" fill="#e6e6e6"/><g fill="none" stroke="#222" stroke-width="2"><ellipse cx="30" cy="30" rx="18" ry="9" transform="rotate(30 30 30)"/><ellipse cx="30" cy="30" rx="18" ry="9" transform="rotate(-30 30 30)"/><ellipse cx="30" cy="30" rx="18" ry="9" transform="rotate(90 30 30)"/></g></svg></span>
    <span class="app on"><svg viewBox="0 0 60 60"><path fill="#41a5ee" d="M14 2h42v16H14Z"/><path fill="#2b7cd3" d="M14 18h42v14H14Z"/><path fill="#185abd" d="M14 32h42v14H14Z"/><path fill="#103f91" d="M14 46h42v12H14Z"/><rect x="2" y="16" width="30" height="30" rx="2" fill="#185abd"/><text x="17" y="38" text-anchor="middle" class="svgt w">W</text></svg></span>
    <span class="app on"><svg viewBox="0 0 60 60"><path fill="#9cd4e6" d="M14 4 50 8l-4 48L10 48Z"/><path fill="#d8f0f8" d="M14 4 40 7 16 40Z"/><path fill="#c7a76b" d="M50 8l4 2-4 46-4 0Z"/><path fill="#e8e8e8" d="M10 48 46 56l4 0-32-8Z"/><path fill="#777" d="M14 2h34v5H14Z"/></svg></span>
    <span class="app on"><svg viewBox="0 0 60 60"><rect x="6" y="2" width="50" height="56" rx="7" fill="#155fc4"/><circle cx="46" cy="14" r="5" fill="#dff1ff"/><path fill="#7a5bc6" d="M18 58 38 18l16 34v6Z"/><path fill="#39c0f5" d="M6 58V44L34 24l-8 34Z"/></svg></span>
  </div>
  <div class="tray">
    <svg class="tr" viewBox="0 0 40 40"><path fill="none" stroke="#000" stroke-width="2" d="M8 27 20 13 32 27"/></svg>
    <svg class="tr cam" viewBox="0 0 40 40"><path fill="none" stroke="#000" stroke-width="2" d="M7 12h20v16H7ZM27 17l7-3v12l-7-3M12 6c3-2 7-2 10 0M12 34c3 2 7 2 10 0"/></svg>
    <svg class="tr" viewBox="0 0 40 40"><g fill="none" stroke="#000" stroke-width="2"><path d="M4 26a23 23 0 0 1 26-20M9 30a16 16 0 0 1 19-17M14 32a9 9 0 0 1 12-12"/></g><circle cx="26" cy="31" r="2.500"/></svg>
    <svg class="tr sound" viewBox="0 0 40 40"><path fill="none" stroke="#000" stroke-width="2" d="M4 15h7l9-8v26l-9-8H4ZM25 15l10 10M35 15 25 25"/></svg>
    <div class="clock"><span>6:11 PM</span><span>6/26/2024</span></div>
    <div class="notif"><svg class="nt" viewBox="0 0 40 36"><path d="M0 0h40v30H16l-8 6v-6H0Z"/><path fill="#fff" d="M8 8h24v3H8ZM8 15h24v3H8ZM8 22h16v3H8Z"/></svg><span class="badge">15</span></div>
  </div>
</footer>
</body>
</html>
```
FILE: styles.css
```css
* { box-sizing: border-box; }
html, body { margin: 0; padding: 0; }
body {
  width: 3840px; height: 2160px; overflow: hidden; display: flex; flex-direction: column;
  background: #fff; color: #1e1e1e;
  font-family: "Open Sans", "Noto Sans", sans-serif; font-size: 31px;
}
.sprite { display: none; }
svg { display: block; flex: none; }
button { border: 0; padding: 0; margin: 0; background: none; font: inherit; color: inherit; }
ul, dl, dd { margin: 0; padding: 0; list-style: none; }
.ic60 { width: 60px; height: 60px; fill: currentColor; }
.ic-close { width: 42px; height: 42px; fill: currentColor; }
.svgt { font-family: "Liberation Sans", sans-serif; font-weight: 700; }
.uf { fill: #fff; font-size: 25px; }
.zy { fill: #f47f20; font-size: 32px; }
.one { fill: #fff; font-size: 13px; }
.uf2 { fill: #fff; font-size: 21px; }
.s { fill: #111; font-size: 20px; font-weight: 400; }
.w { fill: #fff; font-size: 22px; }

/* Browser chrome */
.tabstrip { height: 100px; background: #d3e3fd; display: flex; align-items: flex-start; padding: 15px 0 0 15px; flex: none; font-size: 29px; color: #444; }
.tab-menu { width: 70px; height: 70px; background: #e8f0fe; border-radius: 24px; display: flex; align-items: center; justify-content: center; margin-right: 15px; }
.ic-tabmenu { width: 34px; height: 34px; }
.tab { width: 580px; height: 85px; margin-right: 15px; padding: 15px 25px 0 20px; display: flex; align-items: flex-start; position: relative; }
.tab.active { background: #fff; border-radius: 24px 24px 0 0; color: #1f1f1f; }
.tab.active::before, .tab.active::after { content: ""; position: absolute; bottom: 0; width: 24px; height: 24px; }
.tab.active::before { left: -24px; background: radial-gradient(circle at 0 0, #d3e3fd 24px, #fff 25px); }
.tab.active::after { right: -24px; background: radial-gradient(circle at 100% 0, #d3e3fd 24px, #fff 25px); }
.fav { width: 40px; height: 40px; }
.tab-title { flex: 1; margin: 0 20px; line-height: 44px; white-space: nowrap; mask-image: linear-gradient(90deg, #000 88%, transparent); }
.ic-x { width: 32px; height: 32px; margin-top: 4px; fill: #333; }
.tab-sep { width: 3px; height: 40px; background: #a8c7fa; margin: 16px 0 0 -7px; border-radius: 2px; }
.ic-newtab { width: 26px; height: 26px; margin: 24px 0 0 27px; fill: #333; }
.winctl { margin-left: auto; display: flex; margin-top: 22px; }
.win { width: 26px; height: 26px; margin-right: 87px; }
.win:last-child { margin-right: 45px; }

.toolbar { height: 100px; background: #fff; border-radius: 24px 24px 0 0; padding: 15px 0 0 10px; display: flex; flex: none; align-items: stretch; }
.navic { width: 40px; height: 40px; margin: 22px 25px 0; fill: #444; }
.navic.dim { fill: #b0b0b0; }
.omnibox { margin-left: 21px; width: 3193px; height: 85px; background: #ebeef8; border-radius: 43px; display: flex; align-items: center; padding-left: 14px; }
.tune { width: 56px; height: 56px; background: #fff; border-radius: 50%; display: flex; align-items: center; justify-content: center; }
.ic-tune { width: 38px; height: 38px; fill: #222; }
.url { margin-left: 22px; font-size: 33.750px; color: #1f1f1f; white-space: nowrap; flex: 1; }
.ic-star { width: 44px; height: 44px; fill: #444; margin-right: 37px; }
.tool-right { display: flex; align-items: center; height: 85px; }
.ic-ext { width: 48px; height: 48px; margin-left: 43px; }
.tool-right .ic-ext:last-child { margin-left: 40px; }
.tool-sep { width: 3px; height: 40px; background: #d3e3fd; margin: 0 0 0 41px; }
.avatar { width: 50px; height: 50px; margin-left: 41px; border-radius: 50%; background: #ee3f7c; color: #fff; text-align: center; line-height: 46px; font-size: 29px; }

.bookmarks { height: 103px; flex: none; border-bottom: 3px solid #e0e3e0; padding: 0 0 3px 30px; display: grid; grid-template-columns: 240px 383px 345px 197px 387px 383px 80px 383px 366px 234px 404px 80px 44px 1fr; align-items: center; font-size: 28.500px; color: #333; }
.bm { display: flex; align-items: center; gap: 15px; white-space: nowrap; }
.bmi { width: 40px; height: 40px; }
.cv { color: #e8352f; }
.cvw { color: #fff; }
.bmmore { width: 44px; height: 44px; fill: #444; }
.bmsep { width: 3px; height: 40px; background: #d3e3fd; }
.folder { margin-right: 6px; }

/* WP header */
.wp-head { height: 150px; flex: none; border-bottom: 2px solid #e0e0e0; display: flex; align-items: center; position: relative; }
.logo { width: 150px; height: 148px; }
.head-left { display: flex; margin-left: 50px; gap: 20px; }
.ibtn { width: 80px; height: 80px; border-radius: 5px; display: flex; align-items: center; justify-content: center; }
.ibtn.primary { background: #007cba; color: #fff; }
.ibtn.dark { background: #1e1e1e; color: #fff; }
.ibtn.muted { color: #b0b0b0; }
.cmdbar { width: 1124px; height: 80px; margin-left: 712px; background: #f0f0f0; border-radius: 10px; display: flex; align-items: center; padding-left: 442px; padding-right: 22px; }
.cmd-ic { margin-right: 10px; }
.cmd-title { flex: 1; padding-top: 3px; }
.cmd-key { padding-top: 1px; }
.head-right { margin-left: 669px; display: flex; align-items: center; gap: 20px; }
.ext-btn { margin-left: 3px; }
.save { width: 126px; height: 80px; margin-left: 6px; background: #007cba; color: #fff; border-radius: 5px; }

/* Main */
.wp-main { height: 1547px; flex: none; display: flex; position: relative; }
.listpanel { width: 878px; flex: none; border-right: 3px solid #e0e0e0; }
.lp-tabs { height: 119px; border-bottom: 3px solid #ddd; display: flex; position: relative; }
.lp-tab { width: 383px; padding-left: 41px; line-height: 124px; font-family: "Noto Sans", sans-serif; font-size: 30.500px; font-weight: 500; color: #111; }
.lp-tab + .lp-tab { padding-left: 40px; }
.lp-tab.on { box-shadow: 0 3px 0 #007cba; height: 116px; }
.lp-close { position: absolute; left: 789px; top: 37px; }
.tree { padding-top: 32px; width: 847px; }
.row { height: 90px; display: flex; align-items: center; white-space: nowrap; color: #1e1e1e; position: relative; border-radius: 3px; }
.row .chev { width: 60px; flex: none; margin-right: 11px; }
.row > span:not(.chev) { margin-left: 19px; }
.l1 { padding-left: 63px; }
.l2 { padding-left: 133px; }
.l3 { padding-left: 203px; }
.l4 { padding-left: 273px; }
.l5 { padding-left: 343px; }
.row.selected { background: #007cba; color: #fff; }
.row-more { position: absolute; right: -18px; }

.canvas { flex: 1; min-width: 0; padding-left: 222px; padding-right: 177px; position: relative; overflow: hidden; background: linear-gradient(#fff 1532px, #f0f0f0); }
.card { height: 215px; margin-bottom: 42px; background: #f9f9f9; border: 3px solid #1e1e1e; border-radius: 10px; display: flex; align-items: center; padding: 0 0 4px 420px; position: relative; }
.year { font-family: "Liberation Serif", serif; font-weight: 400; -webkit-text-stroke: 1px #111; font-size: 64px; color: #111; }
.card.current { border-color: #007cba; box-shadow: 0 -1px 0 #1e1e1e, inset 0 2px 0 #007cba, inset 0 -2px 0 #007cba; }
.hidden-box { position: absolute; left: 300px; top: 103px; width: 169px; height: 118px; background: #fff; border: 2px solid #333; border-radius: 5px; }
.card-add { position: absolute; right: -2px; bottom: -2px; width: 61px; height: 61px; background: #1e1e1e; color: #fff; border-radius: 3px; display: flex; align-items: center; justify-content: center; }
.site-foot { margin-top: 112px; display: flex; padding-left: 888px; position: relative; font-family: Inter, sans-serif; color: #111; }
.foot-col { flex: none; }
.foot-col h3 { margin: 0 0 46px; font-size: 49px; font-weight: 400; line-height: 60px; }
.foot-col a { display: block; font-size: 40px; line-height: 60px; margin-bottom: 41px; }
.about { width: 454px; }
.socials { display: flex; gap: 40px; margin-top: 0; }
.soc { width: 90px; height: 90px; border-radius: 50%; display: block; }
.fb { background: #1877f2; }
.ig { background: #f00075; }
.xx { background: #000; }
.li { background: #0a66c2; }
.logo-frag { position: absolute; left: 428px; top: 97px; width: 5px; height: 15px; background: #0a5ba8; transform: skewX(-12deg); }

.vscroll { width: 44px; flex: none; background: #f0f0f0; display: flex; flex-direction: column; align-items: center; position: relative; padding-top: 17px; }
.vscroll.side { width: 41px; background: #f1f1f1; }
.arrow { width: 0; height: 0; border-left: 10px solid transparent; border-right: 10px solid transparent; }
.up-a { border-bottom: 10px solid #505050; }
.up-a.light { border-bottom-color: #a3a3a3; }
.dn-a { border-top: 10px solid #505050; margin-top: auto; margin-bottom: 18px; }
.thumb { width: 38px; background: #c1c1c1; }
.canvas-thumb { margin-top: 937px; height: 479px; }
.side-thumb { margin-top: 15px; height: 843px; }

/* Settings */
.settings { width: 702px; flex: none; border-left: 2px solid #e0e0e0; overflow: hidden; }
.st-tabs { height: 119px; border-bottom: 3px solid #ddd; display: flex; position: relative; }
.st-tab { line-height: 120px; font-family: "Noto Sans", sans-serif; font-size: 30.500px; font-weight: 500; color: #111; }
.st-tab.on { width: 152px; padding-left: 40px; box-shadow: 0 3px 0 #007cba; height: 116px; }
.st-tab + .st-tab { margin-left: 40px; }
.st-close { position: absolute; right: 50px; top: 36px; }
.st-doc { height: 201px; border-bottom: 3px solid #e0e0e0; display: flex; padding: 38px 0 0 39px; }
.st-doc-text { margin-left: 30px; display: flex; flex-direction: column; gap: 16px; line-height: 45px; padding-top: 9px; }
.st-doc-text strong { font-family: "Noto Sans", sans-serif; font-size: 30.500px; font-weight: 500; }
.panel { border-bottom: 3px solid #e0e0e0; padding: 0 41px 41px 39px; }
.panel.last { border: 0; padding-bottom: 0; }
.panel-head { height: 122px; display: flex; justify-content: space-between; align-items: center; font-family: "Noto Sans", sans-serif; font-size: 30.500px; font-weight: 500; }
.panel-head .ic60 { margin: -7px -1px 0 0; }
.panel-head.rev { height: 114px; padding-top: 2px; }
.panel-head.rev .ic60 { margin: 0; }
.meta { margin-top: 13px; }
.meta-row { height: 100px; display: flex; align-items: center; }
.meta-row dt { width: 238px; }
.meta-row dd { color: #007cba; white-space: nowrap; }
.author-label { margin-top: 19px; height: 40px; font-family: "Noto Sans", sans-serif; font-size: 27px; font-weight: 500; line-height: 40px; }
.select { margin-top: 18px; height: 100px; border: 2.500px solid #8a8a8a; border-radius: 5px; display: flex; align-items: center; justify-content: space-between; padding: 2px 20px 0 38px; }
.c-list { margin-top: 13px; display: flex; flex-direction: column; gap: 8px; }
.c-row { height: 90px; display: flex; align-items: center; gap: 21px; padding-left: 30px; border-radius: 5px; }
.c-row.on { background: #1e1e1e; color: #fff; }

/* Context menu */
.ctx { position: absolute; left: 804px; top: -36px; width: 724px; background: #fff; border: 3px solid #ccc; border-radius: 6px; box-shadow: 0 3px 8px rgba(0,0,0,.2); z-index: 5; }
.ctx-group { padding: 20px; border-bottom: 2px solid #ccc; }
.ctx-group.end { border-bottom: 0; }
.ctx-item { height: 90px; display: flex; align-items: center; justify-content: space-between; padding: 0 18px; position: relative; }
.ctx-item kbd { font: inherit; letter-spacing: .5px; }
.ctx-item .ic60 { margin-right: -5px; }
.ctx-item.focus::before { content: ""; position: absolute; left: -5px; right: -5px; top: -4px; bottom: -1px; border: 4px solid #007cba; border-radius: 7px; }

/* Breadcrumb */
.crumbs { height: 60px; flex: none; border-top: 2px solid #e0e0e0; display: flex; align-items: center; padding-left: 65px; }
.crumb-sep { width: 60px; height: 60px; fill: currentColor; margin: 0 9px; }

/* Taskbar */
.taskbar { height: 100px; flex: none; display: flex; background: linear-gradient(90deg, #d4d4d4 0, #dcdcdc 840px, #e8dcd6 1050px, #d8dcc9 1420px, #d5e3cf 1650px, #c8e0d6 2000px, #c6e0d6 2300px, #cfebd0 2830px, #cbe2c8 3300px, #c6dcc6 3840px); }
.start { width: 122px; display: flex; align-items: center; justify-content: center; background: #d2d2d2; }
.winlogo { width: 41px; height: 40px; }
.search { width: 716px; margin-right: 5px; background: #fff; border: 3px solid #ccc; border-right-width: 0; display: flex; align-items: center; padding: 2px 0 0 28px; gap: 30px; font-size: 35.500px; color: #111; }
.searchic { width: 50px; height: 50px; margin-top: -2px; }
.tb-apps { display: flex; }
.app { width: 124.200px; height: 100px; display: flex; align-items: center; justify-content: center; position: relative; padding-bottom: 6px; }
.app svg { width: 60px; height: 60px; }
.app .cvw { width: 36px; height: 36px; }
.app.on::after { content: ""; position: absolute; left: 12px; right: 12px; bottom: 0; height: 5px; background: #0078d4; }
.app.hi { background: #eff3ea; }
.app.hi::after { left: 0; right: 0; }
.tray { margin-left: auto; display: flex; align-items: center; }
.tr { width: 40px; height: 40px; margin: 0 20px; }
.tr.cam { margin: 0 21px 0 25px; }
.tr.sound { margin: 0 18px 0 15px; }
.clock { width: 175px; display: flex; flex-direction: column; align-items: center; font-size: 29px; gap: 9px; color: #000; line-height: 40px; }
.notif { width: 130px; height: 100px; position: relative; padding: 30px 0 0 28px; }
.nt { width: 40px; height: 36px; }
.badge { position: absolute; left: 45px; top: 48px; width: 40px; height: 40px; border-radius: 50%; background: #c0c0c0; border: 1px solid #777; font-size: 26px; line-height: 38px; text-align: center; color: #000; }
```
